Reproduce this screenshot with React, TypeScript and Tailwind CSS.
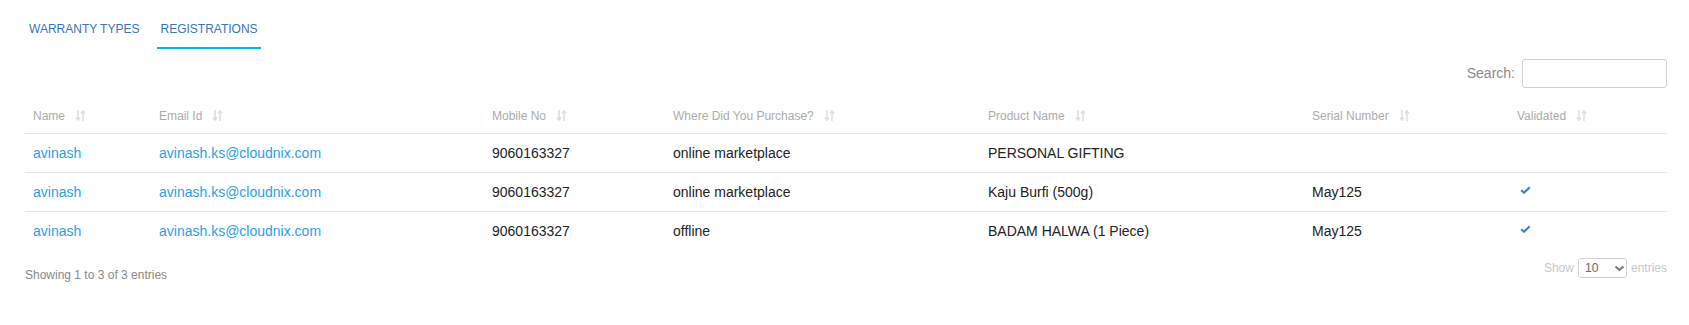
import React from "react";

const columns = [
  { label: "Name", width: "w-[126px]" },
  { label: "Email Id", width: "w-[333px]" },
  { label: "Mobile No", width: "w-[181px]" },
  { label: "Where Did You Purchase?", width: "w-[315px]" },
  { label: "Product Name", width: "w-[324px]" },
  { label: "Serial Number", width: "w-[205px]" },
  { label: "Validated", width: "w-[158px]" },
];

const rows = [
  { name: "avinash", email: "avinash.ks@cloudnix.com", mobile: "9060163327", where: "online marketplace", product: "PERSONAL GIFTING", serial: "", validated: false },
  { name: "avinash", email: "avinash.ks@cloudnix.com", mobile: "9060163327", where: "online marketplace", product: "Kaju Burfi (500g)", serial: "May125", validated: true },
  { name: "avinash", email: "avinash.ks@cloudnix.com", mobile: "9060163327", where: "offline", product: "BADAM HALWA (1 Piece)", serial: "May125", validated: true },
];

function SortIcon() {
  return (
    <svg width="11" height="13" viewBox="0 0 11 13" className="ml-[10px] inline-block align-[-2px]" fill="none" stroke="#dedede" strokeWidth="1.6">
      {/* down arrow */}
      <path d="M3 1v10" />
      <path d="M1 8.5l2 2.5 2-2.5" />
      {/* up arrow */}
      <path d="M8 12V2" />
      <path d="M6 4.5L8 2l2 2.5" />
    </svg>
  );
}

function Check() {
  return (
    <svg width="11" height="8" viewBox="0 0 11 8" className="ml-[3px] -mt-[4px]" fill="none">
      <path d="M1.2 4.2l2.8 2.6L9.8 1.2" stroke="#3b7fe0" strokeWidth="2.2" strokeLinejoin="round" />
    </svg>
  );
}

export default function App() {
  return (
    <div className="min-h-[325px] bg-white pl-[25px] pr-[22px] font-['Liberation_Sans',Arial,sans-serif]">
      {/* Tabs */}
      <div className="flex gap-[15px] pl-[1px] pt-[21px]">
        <div className="px-[3px] pb-[10px] text-[12px] leading-[16px] text-[#3a72b8] border-b-2 border-transparent">WARRANTY TYPES</div>
        <div className="px-[3px] pb-[10px] text-[12px] leading-[16px] text-[#3a72b8] border-b-2 border-[#00b5e6]">REGISTRATIONS</div>
      </div>

      {/* Search */}
      <div className="mt-[10px] flex items-center justify-end gap-[7px]">
        <label className="text-[14px] text-[#8a8a8a]">Search:</label>
        <input className="h-[29px] w-[145px] rounded-[3px] border border-[#cfcfcf] px-2 text-[13px] outline-none" />
      </div>

      {/* Table */}
      <table className="mt-[12px] w-full table-fixed border-collapse">
        <thead>
          <tr className="border-b border-[#e6e6e6]">
            {columns.map((c) => (
              <th key={c.label} className={`${c.width} px-[8px] py-[8px] text-left text-[12px] font-normal leading-[17px] text-[#ababab]`}>
                {c.label}
                <SortIcon />
              </th>
            ))}
          </tr>
        </thead>
        <tbody>
          {rows.map((r, i) => (
            <tr key={i} className={i < rows.length - 1 ? "border-b border-[#e8e8e8]" : ""}>
              <td className="h-[39px] px-[8px] text-[14px] text-[#2ba0e8]">{r.name}</td>
              <td className="px-[8px] text-[14px] text-[#2ba0e8]">{r.email}</td>
              <td className="px-[8px] text-[14px] text-[#222]">{r.mobile}</td>
              <td className="px-[8px] text-[14px] text-[#222]">{r.where}</td>
              <td className="px-[8px] text-[14px] text-[#222]">{r.product}</td>
              <td className="px-[8px] text-[14px] text-[#222]">{r.serial}</td>
              <td className="px-[8px]">{r.validated && <Check />}</td>
            </tr>
          ))}
        </tbody>
      </table>

      {/* Footer */}
      <div className="mt-[7px] flex items-start justify-between">
        <div className="mt-[9px] text-[12px] leading-[16px] text-[#888]">Showing 1 to 3 of 3 entries</div>
        <div className="flex items-center gap-[4px] text-[12px] text-[#c8c8c8]">
          <span>Show</span>
          <div className="relative">
            <select className="h-[20px] w-[49px] appearance-none rounded-[3px] border border-[#d0d0d0] bg-white pl-[6px] text-[12px] leading-[18px] text-[#666] outline-none">
              <option>10</option>
            </select>
            <svg width="11" height="7" viewBox="0 0 11 7" className="pointer-events-none absolute right-[2px] top-[7px]" fill="none">
              <path d="M1.5 1.5l4 3.5 4-3.5" stroke="#777" strokeWidth="2" />
            </svg>
          </div>
          <span>entries</span>
        </div>
      </div>
    </div>
  );
}
